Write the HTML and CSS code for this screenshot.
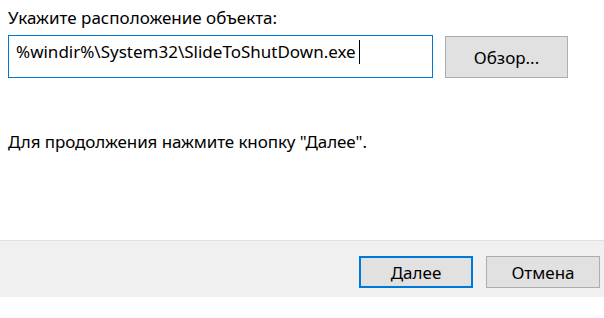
FILE: index.html
```html
<!DOCTYPE html>
<html lang="ru">
<head>
    <meta charset="UTF-8">
    <title>Создать ярлык</title>
    <link rel="stylesheet" href="styles.css">
</head>
<body>
    <div class="wizard">
        <div class="content">
            <div class="caption">Укажите расположение объекта:</div>
            <div class="row">
                <div class="path">%windir%\System32\SlideToShutDown.exe<span class="caret"></span></div>
                <button class="btn browse">Обзор...</button>
            </div>
            <div class="hint">Для продолжения нажмите кнопку "Далее".</div>
        </div>
        <div class="footer">
            <button class="btn primary">Далее</button>
            <button class="btn">Отмена</button>
        </div>
    </div>
</body>
</html>
```

FILE: styles.css
```css
body {
    margin: 0;
    background-color: #fff;
    font-family: "Noto Sans", "Open Sans", sans-serif;
    font-size: 17px;
    color: #000;
}

.wizard {
    width: 604px;
    height: 318px;
}

.content {
    height: 240px;
    padding-left: 8px;
    box-sizing: border-box;
}

.caption {
    padding-top: 6px;
    line-height: 23px;
    height: 29px;
}

.row {
    display: flex;
    align-items: flex-start;
    gap: 12px;
}

.path {
    width: 425px;
    height: 43px;
    box-sizing: border-box;
    border: 1px solid #0078d7;
    padding: 4px 0 0 7px;
    line-height: 23px;
    white-space: nowrap;
}

.caret {
    display: inline-block;
    width: 1px;
    height: 24px;
    background-color: #000;
    margin-left: 3px;
    vertical-align: -6px;
}

.btn {
    font-family: inherit;
    font-size: 17px;
    color: #000;
    background-color: #e1e1e1;
    border: 1px solid #adadad;
    width: 114px;
    height: 32px;
    padding: 0;
    margin: 0;
}

.browse {
    width: 123px;
    height: 42px;
    margin-top: 1px;
}

.hint {
    margin-top: 52px;
    line-height: 23px;
    letter-spacing: -0.1px;
}

.footer {
    height: 57px;
    box-sizing: border-box;
    background-color: #f0f0f0;
    border-top: 1px solid #dfdfdf;
    display: flex;
    justify-content: flex-end;
    align-items: flex-start;
    gap: 13px;
    padding: 15px 4px 0 0;
}

.primary {
    border: 2px solid #0078d7;
}
```
